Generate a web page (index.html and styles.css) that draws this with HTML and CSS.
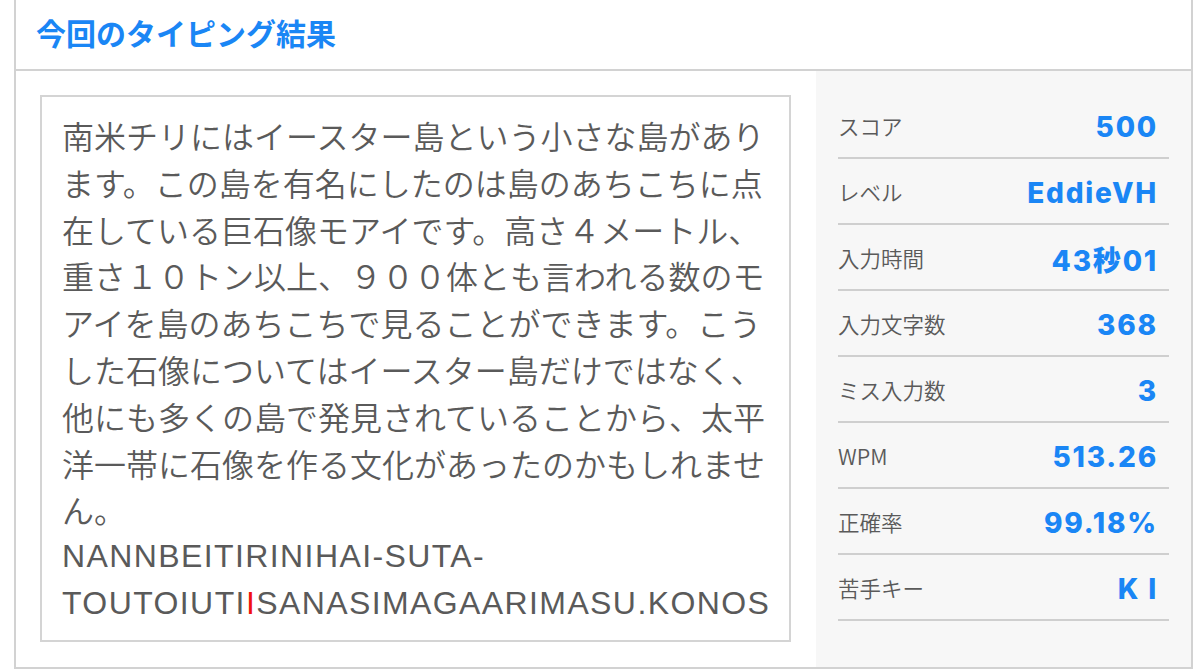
FILE: index.html
```html
<!DOCTYPE html>
<html lang="ja">
<head>
<meta charset="utf-8">
<title>今回のタイピング結果</title>
<link rel="stylesheet" href="styles.css">
</head>
<body>
<section class="result">
  <header class="result-head">
    <h2 class="result-title">今回のタイピング結果</h2>
  </header>
  <div class="result-body">
    <div class="text-pane">
      <div class="text-box">
        <p class="jp-text">南米チリにはイースター島という小さな島があります。この島を有名にしたのは島のあちこちに点在している巨石像モアイです。高さ４メートル、重さ１０トン以上、９００体とも言われる数のモアイを島のあちこちで見ることができます。こうした石像についてはイースター島だけではなく、他にも多くの島で発見されていることから、太平洋一帯に石像を作る文化があったのかもしれません。</p>
        <p class="romaji">NANNBEITIRINIHAI-SUTA-TOUTOIUTI<span class="miss">I</span>SANASIMAGAARIMASU.KONOS</p>
      </div>
    </div>
    <aside class="stats">
      <ul class="stat-list">
        <li class="stat-row"><span class="stat-label">スコア</span><span class="stat-value">500</span></li>
        <li class="stat-row"><span class="stat-label">レベル</span><span class="stat-value">EddieVH</span></li>
        <li class="stat-row"><span class="stat-label">入力時間</span><span class="stat-value">43秒01</span></li>
        <li class="stat-row"><span class="stat-label">入力文字数</span><span class="stat-value">368</span></li>
        <li class="stat-row"><span class="stat-label">ミス入力数</span><span class="stat-value">3</span></li>
        <li class="stat-row"><span class="stat-label">WPM</span><span class="stat-value">513.26</span></li>
        <li class="stat-row"><span class="stat-label">正確率</span><span class="stat-value">99.18%</span></li>
        <li class="stat-row"><span class="stat-label">苦手キー</span><span class="stat-value">K I</span></li>
      </ul>
    </aside>
  </div>
</section>
</body>
</html>
```
FILE: styles.css
```css
html, body {
  margin: 0;
  padding: 0;
  background: #ffffff;
}

body {
  font-family: "Noto Sans CJK JP", "Noto Sans", sans-serif;
  color: #5a5a5a;
}

.result {
  width: 1179px;
  margin-left: 14px;
  border: 2px solid #d2d2d2;
  border-top: none;
  box-sizing: border-box;
}

.result-head {
  height: 71px;
  display: flex;
  align-items: center;
  padding: 0 20px 5px;
  box-sizing: border-box;
  border-bottom: 2px solid #d2d2d2;
}

.result-title {
  margin: 0;
  font-size: 30px;
  line-height: 40px;
  font-weight: 700;
  color: #1a86f5;
}

.result-body {
  display: grid;
  grid-template-columns: 800px 1fr;
}

.text-pane {
  padding: 24px 25px 25px 24px;
}

.text-box {
  height: 547px;
  box-sizing: border-box;
  border: 2px solid #d4d4d4;
  padding: 15px 20px 0 20px;
  overflow: hidden;
}

.jp-text {
  margin: 0;
  font-size: 32px;
  font-weight: 350;
  line-height: 46.8px;
  color: #5a5a5a;
}

.romaji {
  margin: 0;
  font-family: "Liberation Sans", Arial, sans-serif;
  font-size: 32px;
  line-height: 46.8px;
  letter-spacing: 1.4px;
  color: #5a5a5a;
}

.miss {
  color: #f01010;
}

.stats {
  background: #f7f7f7;
  padding: 22px 22px 0 22px;
}

.stat-list {
  list-style: none;
  margin: 0;
  padding: 0;
}

.stat-row {
  display: flex;
  justify-content: space-between;
  align-items: center;
  height: 66px;
  box-sizing: border-box;
  border-bottom: 2px solid #cfcfcf;
  padding-right: 11px;
}

.stat-label {
  font-size: 21.5px;
  font-weight: 350;
  color: #5a5a5a;
}

.stat-value {
  font-family: Inter, "Noto Sans CJK JP", sans-serif;
  font-size: 28px;
  font-weight: 800;
  letter-spacing: 1.8px;
  padding-top: 4px;
  color: #1a86f5;
}
```
